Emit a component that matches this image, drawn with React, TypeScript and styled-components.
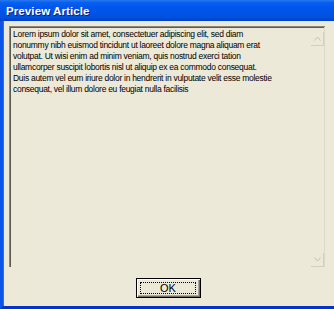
import React from 'react';
import styled, { createGlobalStyle } from 'styled-components';

const Global = createGlobalStyle`
  html, body {
    margin: 0;
    padding: 0;
    background: #ece9d8;
  }
`;

const Window = styled.div`
  width: 334px;
  height: 309px;
  box-sizing: border-box;
  display: flex;
  flex-direction: column;
  background: #ece9d8;
  overflow: hidden;
`;

const TitleBar = styled.div`
  height: 21px;
  flex: none;
  display: flex;
  align-items: center;
  padding-left: 6px;
  background: linear-gradient(
    to bottom,
    #2a78f0 0%,
    #0860ee 12%,
    #0058ee 30%,
    #0053e4 65%,
    #0050dc 85%,
    #003fc4 100%
  );
`;

const Title = styled.span`
  font-family: 'Liberation Sans', Arial, sans-serif;
  font-weight: 700;
  font-size: 11.5px;
  color: #ffffff;
  text-shadow: 1px 1px 0 #0a1e8a;
  letter-spacing: 0.1px;
`;

const Frame = styled.div`
  flex: 1;
  display: flex;
  flex-direction: column;
  border-left: 3px solid #0a55e8;
  border-bottom: 3px solid #0831c8;
  box-shadow: inset 1px 0 0 #2a6cf2;
`;

const Body = styled.div`
  flex: 1;
  display: flex;
  flex-direction: column;
  padding: 5px 9px 0 6px;
`;

const Pane = styled.div`
  height: 240px;
  display: flex;
  border-top: 1px solid #8a877a;
  border-left: 1px solid #8a877a;
  box-shadow: inset 1px 1px 0 #5c5a52;
`;

const Content = styled.div`
  flex: 1;
  padding: 2px 0 0 3px;
  font-family: 'Liberation Sans', Arial, sans-serif;
  font-size: 8.5px;
  line-height: 11px;
  letter-spacing: -0.28px;
  color: #000;
  white-space: nowrap;
`;

const Scroll = styled.div`
  width: 13px;
  display: flex;
  flex-direction: column;
  justify-content: space-between;
  padding: 5px 0 0 0;
  border-right: 1px solid #dcd9cb;
`;

const ArrowBox = styled.div`
  width: 12px;
  height: 13px;
  display: flex;
  align-items: center;
  justify-content: center;
  border-right: 1px solid #d2cfc1;
  border-bottom: 1px solid #d2cfc1;
`;

const Footer = styled.div`
  flex: 1;
  display: flex;
  justify-content: center;
  padding-top: 11px;
  padding-left: 3px;
`;

const Button = styled.button`
  width: 65px;
  height: 20px;
  padding: 2px;
  box-sizing: border-box;
  background: #ece9d8;
  border: 1px solid #000;
  box-shadow: inset 1px 1px 0 #ffffff, inset -1px -1px 0 #716f64, inset -2px -2px 0 #aca899;
  display: flex;
  align-items: stretch;
  justify-content: stretch;
  cursor: default;
`;

const Focus = styled.span`
  flex: 1;
  margin: 1px 2px 1px 1px;
  border: 1px dotted #000;
  display: flex;
  align-items: center;
  justify-content: center;
  font-family: 'Liberation Sans', Arial, sans-serif;
  font-size: 11px;
  color: #000;
`;

const Arrow = ({ up }: { up?: boolean }) => (
  <svg width="7" height="5" viewBox="0 0 7 5">
    <path
      d={up ? 'M0.5 4.5 L3.5 1 L6.5 4.5' : 'M0.5 0.5 L3.5 4 L6.5 0.5'}
      fill="none"
      stroke="#c4c1b3"
      strokeWidth="1"
    />
  </svg>
);

const lines = [
  'Lorem ipsum dolor sit amet, consectetuer adipiscing elit, sed diam',
  'nonummy nibh euismod tincidunt ut laoreet dolore magna aliquam erat',
  'volutpat. Ut wisi enim ad minim veniam, quis nostrud exerci tation',
  'ullamcorper suscipit lobortis nisl ut aliquip ex ea commodo consequat.',
  'Duis autem vel eum iriure dolor in hendrerit in vulputate velit esse molestie',
  'consequat, vel illum dolore eu feugiat nulla facilisis',
];

export default function App() {
  return (
    <>
      <Global />
      <Window>
        <TitleBar>
          <Title>Preview Article</Title>
        </TitleBar>
        <Frame>
          <Body>
            <Pane>
              <Content>
                {lines.map((l, i) => (
                  <div key={i}>{l}</div>
                ))}
              </Content>
              <Scroll>
                <ArrowBox>
                  <Arrow up />
                </ArrowBox>
                <ArrowBox>
                  <Arrow />
                </ArrowBox>
              </Scroll>
            </Pane>
            <Footer>
              <Button>
                <Focus>OK</Focus>
              </Button>
            </Footer>
          </Body>
        </Frame>
      </Window>
    </>
  );
}
